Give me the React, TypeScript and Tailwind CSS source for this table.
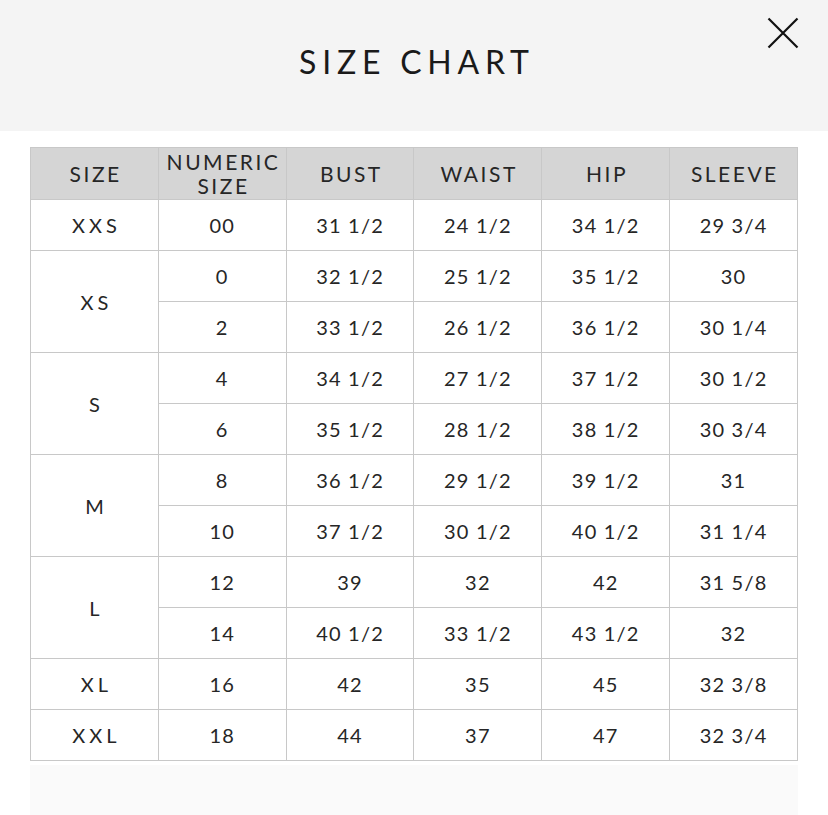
import React from "react";

type Row = { size?: string; span?: number; cells: string[] };

const rows: Row[] = [
  { size: "XXS", span: 1, cells: ["00", "31 1/2", "24 1/2", "34 1/2", "29 3/4"] },
  { size: "XS", span: 2, cells: ["0", "32 1/2", "25 1/2", "35 1/2", "30"] },
  { cells: ["2", "33 1/2", "26 1/2", "36 1/2", "30 1/4"] },
  { size: "S", span: 2, cells: ["4", "34 1/2", "27 1/2", "37 1/2", "30 1/2"] },
  { cells: ["6", "35 1/2", "28 1/2", "38 1/2", "30 3/4"] },
  { size: "M", span: 2, cells: ["8", "36 1/2", "29 1/2", "39 1/2", "31"] },
  { cells: ["10", "37 1/2", "30 1/2", "40 1/2", "31 1/4"] },
  { size: "L", span: 2, cells: ["12", "39", "32", "42", "31 5/8"] },
  { cells: ["14", "40 1/2", "33 1/2", "43 1/2", "32"] },
  { size: "XL", span: 1, cells: ["16", "42", "35", "45", "32 3/8"] },
  { size: "XXL", span: 1, cells: ["18", "44", "37", "47", "32 3/4"] },
];

const cell = "border border-[#c8c8c8] text-center align-middle p-0";
const head = `${cell} font-normal text-[21px] tracking-[0.12em] pl-[0.12em]`;

export default function App() {
  return (
    <div className="w-[828px] h-[815px] bg-white overflow-hidden text-[#262626] font-['Lato','Liberation_Sans',sans-serif]">
      <div className="relative h-[131px] bg-[#f4f4f4] flex items-center justify-center">
        <h1 className="text-[32px] tracking-[0.18em] font-normal -mt-[8px] pl-[0.18em] text-[#1a1a1a]">SIZE CHART</h1>
        <button className="absolute top-[17px] right-[29px] w-[32px] h-[32px] flex items-center justify-center">
          <svg width="32" height="32" viewBox="0 0 32 32" fill="none" stroke="#111" strokeWidth="2.2">
            <path d="M1.5 1.5 L30.5 30.5 M30.5 1.5 L1.5 30.5" />
          </svg>
        </button>
      </div>

      <table className="ml-[30px] mt-[16px] w-[768px] border-collapse table-fixed text-[20px] tracking-[0.06em]">
        <thead>
          <tr className="bg-[#d5d5d5] h-[52px]">
            <th className={head}>SIZE</th>
            <th className={`${head} leading-[24px]`}>
              <div>NUMERIC</div>
              <div>SIZE</div>
            </th>
            <th className={head}>BUST</th>
            <th className={head}>WAIST</th>
            <th className={head}>HIP</th>
            <th className={head}>SLEEVE</th>
          </tr>
        </thead>
        <tbody>
          {rows.map((r, i) => (
            <tr key={i} className="h-[51px]">
              {r.size && (
                <td rowSpan={r.span} className={`${cell} tracking-[0.2em] pl-[0.2em]`}>
                  {r.size}
                </td>
              )}
              {r.cells.map((c, j) => (
                <td key={j} className={cell}>
                  {c}
                </td>
              ))}
            </tr>
          ))}
        </tbody>
      </table>

      <div className="ml-[30px] mt-[4px] w-[768px] h-[60px] bg-[#fafafa]" />
    </div>
  );
}
